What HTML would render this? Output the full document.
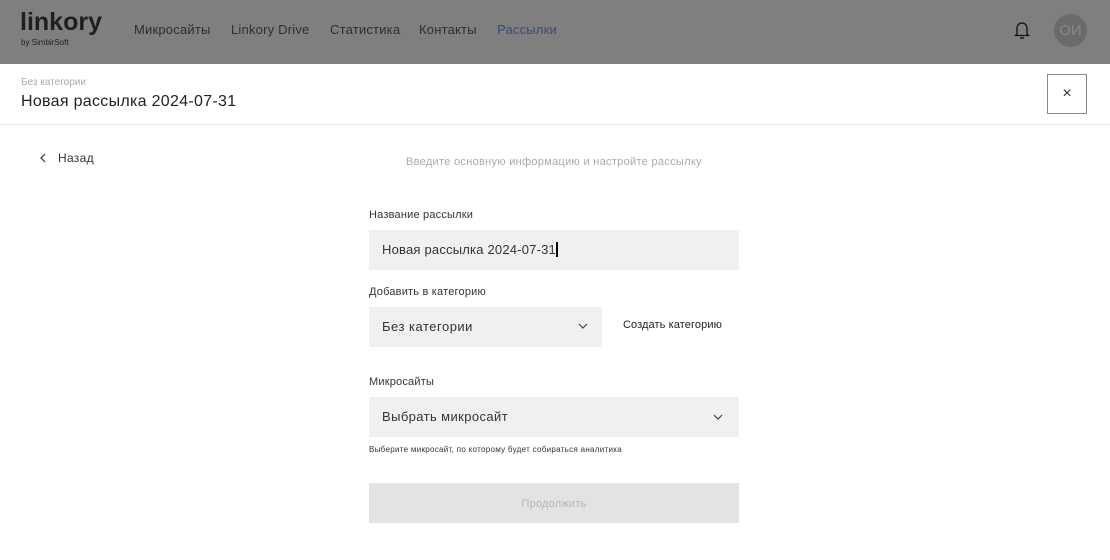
<!DOCTYPE html>
<html><head><meta charset="utf-8"><style>
*{margin:0;padding:0;box-sizing:border-box}
body{width:1110px;height:560px;overflow:hidden;background:#fff;font-family:"Liberation Sans",sans-serif;color:#222;position:relative}
.a{position:absolute;white-space:nowrap}
.hdr{position:absolute;left:0;top:0;width:1110px;height:64px;background:#7f7f7f}
.nav{font-size:13px;color:#2e2e2e;top:22px;letter-spacing:0.2px}
.lbl{font-size:11px;color:#333;letter-spacing:0.2px}
.fld{position:absolute;background:#eff0f2;font-size:13px;color:#333;padding-left:13px;line-height:40px;letter-spacing:0.2px}
</style></head><body>
<div class="hdr"></div>
<div class="a" style="left:20px;top:8px;font-size:25px;font-weight:bold;color:#1f1f1f">linkory</div>
<div class="a" style="left:21px;top:38px;font-size:8px;color:#1f1f1f">by SimbirSoft</div>
<div class="a nav" style="left:134px">Микросайты</div>
<div class="a nav" style="left:231px">Linkory Drive</div>
<div class="a nav" style="left:330px">Статистика</div>
<div class="a nav" style="left:419px">Контакты</div>
<div class="a nav" style="left:497px;color:#3c4a78">Рассылки</div>
<svg class="a" style="left:1013px;top:20px" width="18" height="20" viewBox="0 0 18 20" fill="none" stroke="#111" stroke-width="1.3"><path d="M4 14V8a5 5 0 0 1 10 0v6l1.5 1.5h-13z"/><path d="M7 18h4"/></svg>
<div class="a" style="left:1054px;top:14px;width:33px;height:33px;border-radius:50%;background:#6b6b6b;color:#888;font-size:15px;text-align:center;line-height:33px">ОИ</div>
<div class="a" style="left:21px;top:77px;font-size:10px;color:#aaa">Без категории</div>
<div class="a" style="left:21px;top:93px;font-size:16px;color:#222;letter-spacing:0.3px">Новая рассылка 2024-07-31</div>
<div class="a" style="left:1047px;top:74px;width:40px;height:40px;border:1px solid #888;text-align:center;line-height:38px;font-size:16px;color:#333">×</div>
<div class="a" style="left:0;top:124px;width:1110px;height:1px;background:#e4e4e4"></div>
<svg class="a" style="left:39px;top:153px" width="8" height="10"><path d="M6 1L2 5l4 4" fill="none" stroke="#333" stroke-width="1.2"/></svg>
<div class="a" style="left:58px;top:151px;font-size:12px;color:#333;letter-spacing:0.3px">Назад</div>
<div class="a" style="left:406px;top:156px;font-size:11px;color:#aaa;letter-spacing:0.3px">Введите основную информацию и настройте рассылку</div>
<div class="a lbl" style="left:369px;top:209px">Название рассылки</div>
<div class="fld" style="left:369px;top:230px;width:370px;height:40px">Новая рассылка 2024-07-31<span style="display:inline-block;width:2px;height:15px;background:#000;vertical-align:-3px"></span></div>
<div class="a lbl" style="left:369px;top:286px">Добавить в категорию</div>
<div class="fld" style="left:369px;top:307px;width:233px;height:40px;letter-spacing:0.5px">Без категории</div>
<svg class="a" style="left:578px;top:323px" width="10" height="6"><path d="M1 1l4 4 4-4" fill="none" stroke="#444" stroke-width="1.2"/></svg>
<div class="a" style="left:623px;top:319px;font-size:11px;color:#222;letter-spacing:0.1px">Создать категорию</div>
<div class="a lbl" style="left:369px;top:376px">Микросайты</div>
<div class="fld" style="left:369px;top:397px;width:370px;height:40px;letter-spacing:0.4px">Выбрать микросайт</div>
<svg class="a" style="left:713px;top:414px" width="10" height="6"><path d="M1 1l4 4 4-4" fill="none" stroke="#444" stroke-width="1.2"/></svg>
<div class="a" style="left:369px;top:445px;font-size:8px;color:#333;letter-spacing:0.3px">Выберите микросайт, по которому будет собираться аналитика</div>
<div class="a" style="left:369px;top:483px;width:370px;height:40px;background:#e3e3e3;color:#b5b5b5;font-size:11px;text-align:center;line-height:42px;letter-spacing:0.2px">Продолжить</div>
</body></html>
